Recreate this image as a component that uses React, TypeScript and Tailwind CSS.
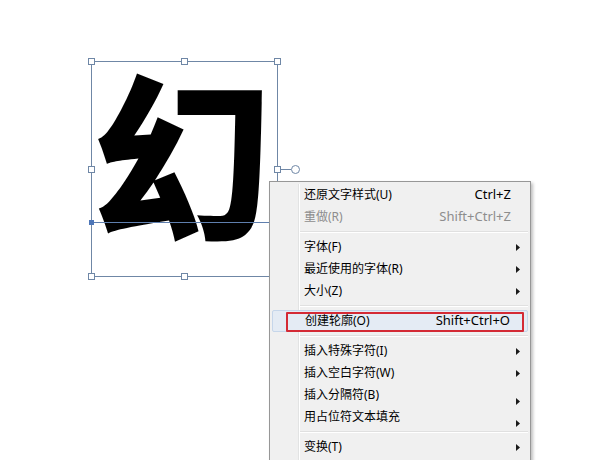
import React from 'react';

type Item =
  | { sep: true }
  | {
      label: string;
      shortcut?: string;
      sub?: boolean;
      disabled?: boolean;
      active?: boolean;
      arrowLow?: boolean;
    };

const items: Item[] = [
  { label: '还原文字样式(U)', shortcut: 'Ctrl+Z' },
  { label: '重做(R)', shortcut: 'Shift+Ctrl+Z', disabled: true },
  { sep: true },
  { label: '字体(F)', sub: true },
  { label: '最近使用的字体(R)', sub: true },
  { label: '大小(Z)', sub: true },
  { sep: true },
  { label: '创建轮廓(O)', shortcut: 'Shift+Ctrl+O', active: true },
  { sep: true },
  { label: '插入特殊字符(I)', sub: true },
  { label: '插入空白字符(W)', sub: true },
  { label: '插入分隔符(B)', sub: true, arrowLow: true },
  { label: '用占位符文本填充', sub: true, arrowLow: true },
  { sep: true },
  { label: '变换(T)', sub: true },
];

function Arrow() {
  return (
    <svg width="4" height="7" viewBox="0 0 4 7">
      <path d="M0 0 L4 3.5 L0 7 Z" fill="#1a1a1a" />
    </svg>
  );
}

function SelectionFrame() {
  // handles of the selected text frame
  const handles = [
    [91, 61], [184, 61], [277, 61],
    [91, 169], [277, 169],
    [91, 276], [184, 276],
  ];
  return (
    <svg className="absolute left-0 top-0" width="615" height="460">
      <rect x="91.5" y="61.5" width="186" height="215" fill="none" stroke="#6f87a6" strokeWidth="1" />
      <line x1="91" y1="222.5" x2="270" y2="222.5" stroke="#5f7fae" strokeWidth="1" />
      <rect x="89" y="220" width="5" height="5" fill="#4d76b8" />
      <line x1="280" y1="169.5" x2="291" y2="169.5" stroke="#6f87a6" strokeWidth="1" />
      <circle cx="295.5" cy="169.5" r="4" fill="#fff" stroke="#6f87a6" strokeWidth="1" />
      {handles.map(([x, y]) => (
        <rect key={`${x}-${y}`} x={x - 2.5} y={y - 2.5} width="6" height="6" fill="#fff" stroke="#6f87a6" strokeWidth="1" />
      ))}
    </svg>
  );
}

function ContextMenu() {
  return (
    <div className="absolute left-[269px] top-[181px] w-[262px] h-[300px] border border-[#979797] bg-[#f0f0f0] p-[2px] font-['Noto_Sans','Noto_Sans_CJK_SC',sans-serif] text-[12px] text-black shadow-[2px_2px_3px_rgba(0,0,0,0.25)]">
      {/* icon gutter */}
      <div className="absolute left-[28px] top-[2px] bottom-0 w-[2px] border-l border-[#e2e3e3] border-r border-r-white" />
      <div className="relative flex flex-col">
        {items.map((it, i) =>
          'sep' in it ? (
            <div key={i} className="h-[8px] flex flex-col justify-center pl-[28px]">
              <div className="h-px bg-[#e0e0e0]" />
              <div className="h-px bg-white" />
            </div>
          ) : (
            <div
              key={i}
              className={`relative flex items-center h-[22px] pl-[32px] pr-[8px] ${
                it.active ? 'bg-[#e4ebf4] rounded-[2px] border border-[#c6d6ea]' : ''
              } ${it.disabled ? 'text-[#8d8d8d]' : ''}`}
            >
              {it.active && (
                <div className="absolute left-[13px] right-[3px] top-[1px] bottom-[-1px] border-2 border-[#d42a35] rounded-[1px]" />
              )}
              <span className="flex-1 whitespace-nowrap">{it.label}</span>
              {it.shortcut && <span className="text-[13px] whitespace-nowrap">{it.shortcut}</span>}
              <div className={`w-[9px] flex justify-end ${it.arrowLow ? 'translate-y-[6px]' : ''}`}>
                {it.sub && <Arrow />}
              </div>
            </div>
          )
        )}
      </div>
    </div>
  );
}

export default function App() {
  return (
    <div className="relative w-[615px] h-[460px] overflow-hidden bg-white">
      <div className="absolute left-[92px] top-[42px] text-[180px] leading-[1.2] font-black text-black font-['Noto_Sans_CJK_SC',sans-serif]">
        幻
      </div>
      <SelectionFrame />
      <ContextMenu />
    </div>
  );
}
